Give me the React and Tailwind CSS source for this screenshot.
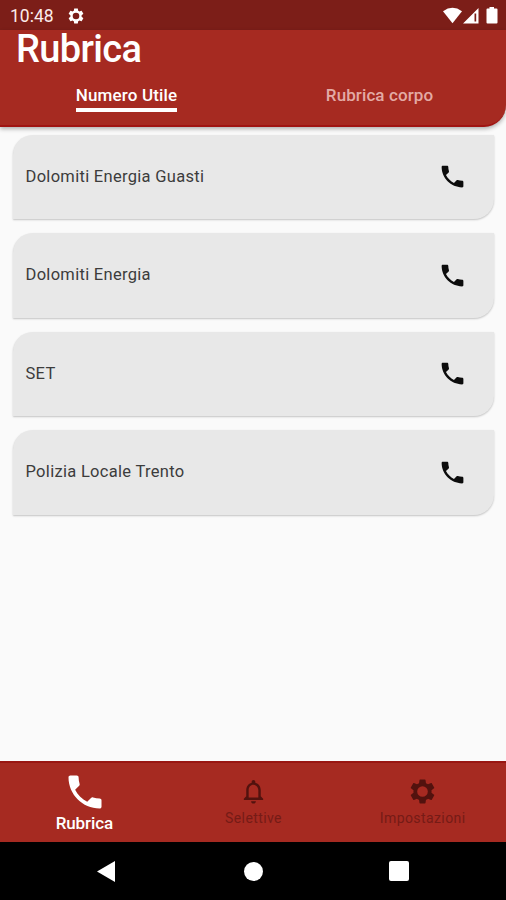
import { MdPhone, MdNotificationsNone } from "react-icons/md";

const contacts = ["Dolomiti Energia Guasti", "Dolomiti Energia", "SET", "Polizia Locale Trento"];

function Gear({ size, className }) {
  return (
    <svg width={size} height={size} viewBox="0 0 24 24" fill="currentColor" className={className}>
      <path
        fillRule="evenodd"
        d="M19.43 12.98c.04-.32.07-.64.07-.98s-.03-.66-.07-.98l2.110-1.650c.19-.15.24-.42.12-.64l-2-3.460c-.12-.22-.39-.3-.61-.22l-2.490 1c-.52-.4-1.080-.73-1.690-.98l-.38-2.650C14.460 2.180 14.250 2 14 2h-4c-.25 0-.46.18-.49.42l-.38 2.650c-.61.25-1.170.59-1.690.98l-2.490-1c-.23-.09-.49 0-.61.22l-2 3.460c-.13.22-.07.49.12.64l2.110 1.650c-.04.32-.07.65-.07.98s.03.66.07.98l-2.110 1.650c-.19.15-.24.42-.12.64l2 3.460c.12.22.39.3.61.22l2.490-1c.52.4 1.080.73 1.690.98l.38 2.650c.03.24.24.42.49.42h4c.25 0 .46-.18.49-.42l.38-2.650c.61-.25 1.170-.59 1.690-.98l2.490 1c.23.09.49 0 .61-.22l2-3.460c.12-.22.07-.49-.12-.64zM12 16.400a4.400 4.400 0 1 1 0-8.800 4.400 4.400 0 0 1 0 8.800z"
      />
    </svg>
  );
}

function StatusBar() {
  return (
    <div className="flex h-[30px] shrink-0 items-center bg-[#7c1e18] pl-[10px] pr-[8px] pt-[1px] text-[#fbeceb]">
      <span className="w-[57px] text-[17.5px] leading-[20px]">10:48</span>
      <Gear size={18} className="text-white" />
      <svg className="ml-auto" width="55" height="18" viewBox="0 0 55 18" fill="#fff">
        <path d="M0 4.200Q9.500-2.600 19 4.200L9.500 16.200Z" />
        <path fillRule="evenodd" d="M35.500 1V16.500H20ZM31.500 6.500V14.500H33.200V6.500Z" />
        <path d="M46.500 0h4.500v1.500h2.500q1 0 1 1v13q0 1-1 1h-9q-1 0-1-1v-13q0-1 1-1h2z" />
      </svg>
    </div>
  );
}

function Header() {
  return (
    <header className="relative z-10 h-[97px] shrink-0 rounded-br-[22px] border-b-2 border-[#a01412] bg-[#a62a21] shadow-[0_2px_4px_rgba(0,0,0,0.3)]">
      <h1 className="pl-[16px] text-[38px] font-medium leading-[38px] tracking-[-0.65px] text-white">Rubrica</h1>
      <nav className="mt-[17px] grid grid-cols-2 text-[17px] font-medium leading-[20px]">
        <div className="flex justify-center">
          <span className="whitespace-nowrap border-b-4 border-white pb-[3px] tracking-[0.15px] text-white">Numero Utile</span>
        </div>
        <div className="text-center tracking-[0.1px] text-[#e3aaa5]">Rubrica corpo</div>
      </nav>
    </header>
  );
}

function Contact({ name }) {
  return (
    <li className="flex h-[84.5px] items-center justify-between rounded-br-[20px] rounded-tl-[20px] bg-[#e8e8e8] pl-[12.5px] pr-[27px] shadow-[0_1px_2px_rgba(0,0,0,0.22)]">
      <span className="pt-[1px] text-[16.5px] tracking-[0.3px] text-[#3c3c3c]">{name}</span>
      <MdPhone size={29} className="text-[#0c0c0c]" />
    </li>
  );
}

export default function App() {
  return (
    <div className="flex h-[900px] w-[506px] flex-col overflow-hidden bg-[#fafafa] font-['Roboto',sans-serif]">
      <StatusBar />
      <Header />
      <ul className="flex flex-1 flex-col gap-[14px] pl-[13px] pr-[12px] pt-[7.5px]">
        {contacts.map((name) => (
          <Contact key={name} name={name} />
        ))}
      </ul>
      <footer className="grid h-[81px] shrink-0 grid-cols-3 border-t-2 border-[#991612] bg-[#a62a21]">
        <div className="flex flex-col items-center pt-[7px] text-white">
          <MdPhone size={44} className="ml-[2px]" />
          <span className="mt-[-1px] text-[17px] font-medium leading-[20px] tracking-[-0.1px]">Rubrica</span>
        </div>
        <div className="flex flex-col items-center pl-[1px] pt-[14px]">
          <MdNotificationsNone size={29} className="text-[#52120e]" />
          <span className="mt-[3px] text-[14px] leading-[18px] tracking-[0.4px] text-[#751b16]">Selettive</span>
        </div>
        <div className="flex flex-col items-center pl-[2px] pt-[14px]">
          <Gear size={29} className="text-[#52120e]" />
          <span className="mt-[3px] text-[14px] leading-[18px] tracking-[0.4px] text-[#751b16]">Impostazioni</span>
        </div>
      </footer>
      <div className="flex h-[58px] shrink-0 items-center justify-between bg-black pl-[97px] pr-[97px]">
        <svg width="18" height="21" viewBox="0 0 18 21" fill="#fff">
          <path d="M18 0V21L0 10.500Z" />
        </svg>
        <div className="ml-[2px] h-[19px] w-[19px] rounded-full bg-white" />
        <div className="h-[20px] w-[20px] rounded-[2px] bg-white" />
      </div>
    </div>
  );
}
